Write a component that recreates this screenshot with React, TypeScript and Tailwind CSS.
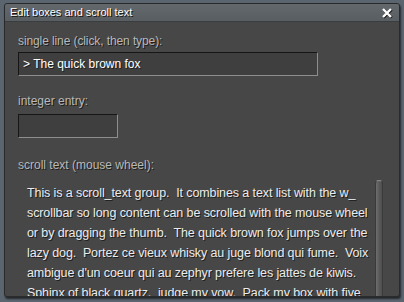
const lines = [
  "This is a scroll_text group.  It combines a text list with the w_",
  "scrollbar so long content can be scrolled with the mouse wheel",
  "or by dragging the thumb.  The quick brown fox jumps over the",
  "lazy dog.  Portez ce vieux whisky au juge blond qui fume.  Voix",
  "ambigue d'un coeur qui au zephyr prefere les jattes de kiwis.",
  "Sphinx of black quartz,  judge my vow.  Pack my box with five",
];

export default function App() {
  return (
    <div className="w-[404px] h-[302px] overflow-hidden bg-[#5b6570] pt-[3px] pl-[4px] font-['Liberation_Sans',sans-serif]">
      <div className="w-[396px] h-[294px] flex flex-col rounded-[3px] border border-[#2a2a2a] bg-[#474747] overflow-hidden shadow-[1px_2px_2px_rgba(0,0,0,0.6)]">
        {/* title bar */}
        <div className="h-[18px] shrink-0 flex items-center justify-between px-[5px] bg-gradient-to-b from-[#63686c] to-[#595e62] border-b border-[#3a3d40]">
          <span className="text-[11px] leading-none text-white [text-shadow:1px_1px_0_#111]">
            Edit boxes and scroll text
          </span>
          <svg width="12" height="12" viewBox="0 0 12 12" className="mr-[1px]">
            <path d="M2 2L10 10M10 2L2 10" stroke="#111" strokeWidth="2.6" transform="translate(0.7 0.7)" />
            <path d="M2 2L10 10M10 2L2 10" stroke="#fff" strokeWidth="2.4" />
          </svg>
        </div>

        {/* body */}
        <div className="flex-1 flex flex-col px-[13px] pt-[12px] text-[12px] [text-shadow:1px_1px_0_#1e1e1e]">
          <div className="h-[14px] leading-[14px] text-[#b8b8b8] tracking-[-0.1px]">single line (click, then type):</div>
          <div className="mt-[4px] w-[300px] h-[24px] flex items-center pl-[4px] bg-[#3f3f3f] border border-t-[#161616] border-l-[#161616] border-b-[#8e8e8e] border-r-[#8e8e8e] text-[12px] text-white">
            &gt; The quick brown fox
          </div>

          <div className="mt-[18px] h-[14px] leading-[14px] text-[#b8b8b8]">integer entry:</div>
          <div className="mt-[6px] w-[100px] h-[24px] bg-[#3f3f3f] border border-t-[#161616] border-l-[#161616] border-b-[#8e8e8e] border-r-[#8e8e8e]" />

          <div className="mt-[20px] h-[14px] leading-[14px] text-[#b8b8b8]">scroll text (mouse wheel):</div>

          <div className="mt-[8px] flex-1 flex overflow-hidden">
            <div className="flex-1 pl-[9px] pt-[3px] text-[12.5px] leading-[20px] text-[#ececec] tracking-[-0.1px]">
              {lines.map((l) => (
                <div key={l} className="whitespace-pre">
                  {l}
                </div>
              ))}
            </div>
            <div className="w-[8px] mr-[3px] rounded-t-[4px] bg-gradient-to-r from-[#6e6e6e] via-[#5a5a5a] to-[#4e4e4e] border border-[#3a3a3a] border-t-[#8a8a8a]" />
          </div>
        </div>
      </div>
    </div>
  );
}
